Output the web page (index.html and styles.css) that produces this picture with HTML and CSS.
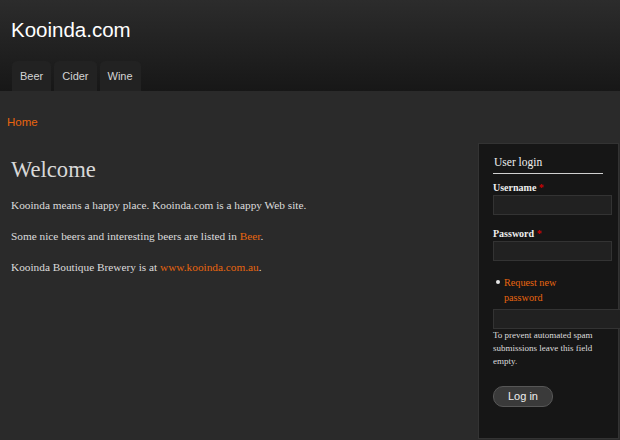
FILE: index.html
```html
<!DOCTYPE html>
<html>
<head>
<meta charset="utf-8">
<link rel="stylesheet" href="styles.css">
</head>
<body>
<header class="header">
  <div class="site-name">Kooinda.com</div>
  <nav class="tabs">
    <a class="tab">Beer</a>
    <a class="tab">Cider</a>
    <a class="tab">Wine</a>
  </nav>
</header>
<div class="breadcrumb"><a class="link">Home</a></div>
<div class="layout">
  <main class="main">
    <h1 class="title">Welcome</h1>
    <p class="para">Kooinda means a happy place. Kooinda.com is a happy Web site.</p>
    <p class="para">Some nice beers and interesting beers are listed in <a class="link">Beer</a>.</p>
    <p class="para">Kooinda Boutique Brewery is at <a class="link">www.kooinda.com.au</a>.</p>
  </main>
  <aside class="sidebar">
    <h2 class="block-title">User login</h2>
    <label class="label">Username <span class="req">*</span></label>
    <div class="input"></div>
    <label class="label label-pw">Password <span class="req">*</span></label>
    <div class="input"></div>
    <ul class="links">
      <li class="links-item"><a class="link">Request new password</a></li>
    </ul>
    <div class="input input-wide"></div>
    <div class="desc">To prevent automated spam submissions leave this field empty.</div>
    <div class="button">Log in</div>
  </aside>
</div>
</body>
</html>
```

FILE: styles.css
```css
html, body {
  margin: 0;
  padding: 0;
  background: #2a2a2a;
  width: 620px;
  height: 440px;
  overflow: hidden;
}
body {
  font-family: "Liberation Serif", "Times New Roman", serif;
  color: #dcdcdc;
}
.header {
  height: 91px;
  background: linear-gradient(#2c2c2c, #171717);
  display: flex;
  flex-direction: column;
  justify-content: space-between;
}
.site-name {
  font-family: "Liberation Sans", Arial, sans-serif;
  font-size: 20.5px;
  color: #ffffff;
  padding: 17px 0 0 11px;
  line-height: 25px;
}
.tabs {
  display: flex;
  gap: 3px;
  padding-left: 12px;
}
.tab {
  font-family: "Liberation Sans", Arial, sans-serif;
  font-size: 11px;
  color: #d4d4d4;
  background: #222222;
  border-radius: 5px 5px 0 0;
  height: 30px;
  line-height: 30px;
  padding: 0 8px;
}
.breadcrumb {
  padding: 24px 0 0 7px;
  height: 28px;
  font-family: "Liberation Sans", Arial, sans-serif;
  font-size: 11.5px;
  line-height: 14px;
}
.link {
  color: #e8650f;
  text-decoration: none;
}
.layout {
  display: flex;
  align-items: flex-start;
}
.main {
  flex: 1;
  padding: 13px 0 0 11px;
}
.title {
  font-weight: normal;
  font-size: 22.6px;
  line-height: 28px;
  margin: 0 0 13px;
  color: #d8d8d8;
}
.para {
  font-size: 11.3px;
  line-height: 16px;
  margin: 0 0 15px;
}
.sidebar {
  width: 110px;
  margin-right: 1px;
  background: #161616;
  border: 1px solid #333333;
  padding: 10px 15px 0 14px;
  height: 284px;
}
.block-title {
  font-weight: normal;
  font-size: 11.5px;
  line-height: 16px;
  margin: 0 0 6px;
  padding: 0 0 3px 1px;
  border-bottom: 1px solid #d0d0d0;
  color: #eeeeee;
}
.label {
  display: block;
  font-weight: bold;
  font-size: 10px;
  line-height: 14px;
  color: #eeeeee;
  padding-top: 1px;
}
.label-pw {
  margin-top: 11px;
}
.req {
  color: #d00000;
}
.input {
  width: 117px;
  height: 18px;
  margin-top: 0;
  background: #212121;
  border: 1px solid #333333;
}
.input-wide {
  width: 140px;
  margin-top: 4px;
}
.links {
  margin: 14px 0 0;
  padding: 0 0 0 11px;
  font-size: 10.2px;
  line-height: 15px;
  list-style: none;
}
.links-item {
  position: relative;
  width: 70px;
}
.links-item::before {
  content: "";
  position: absolute;
  left: -8px;
  top: 5px;
  width: 4px;
  height: 4px;
  border-radius: 50%;
  background: #e6e6e6;
}
.desc {
  font-size: 9px;
  line-height: 13px;
  margin-top: 0;
  color: #dddddd;
}
.button {
  display: inline-block;
  margin-top: 18px;
  width: 58px;
  height: 19px;
  line-height: 19px;
  text-align: center;
  border: 1px solid #575757;
  border-radius: 10px;
  background: #3a3a3a;
  font-family: "Liberation Sans", Arial, sans-serif;
  font-size: 11px;
  color: #eeeeee;
}
```
